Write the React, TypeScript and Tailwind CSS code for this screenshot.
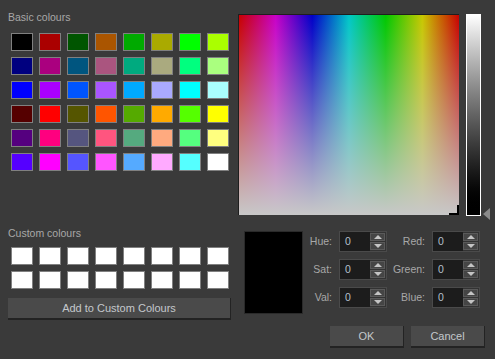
import React from "react";

const basic = [
  ["#000000", "#aa0000", "#005500", "#aa5500", "#00aa00", "#aaaa00", "#00ff00", "#aaff00"],
  ["#00007f", "#aa007f", "#00557f", "#aa557f", "#00aa7f", "#aaaa7f", "#00ff7f", "#aaff7f"],
  ["#0000ff", "#aa00ff", "#0055ff", "#aa55ff", "#00aaff", "#aaaaff", "#00ffff", "#aaffff"],
  ["#550000", "#ff0000", "#555500", "#ff5500", "#55aa00", "#ffaa00", "#55ff00", "#ffff00"],
  ["#55007f", "#ff007f", "#55557f", "#ff557f", "#55aa7f", "#ffaa7f", "#55ff7f", "#ffff7f"],
  ["#5500ff", "#ff00ff", "#5555ff", "#ff55ff", "#55aaff", "#ffaaff", "#55ffff", "#ffffff"],
];

const Swatch = ({ color }: { color: string }) => (
  <div className="w-[22px] h-[18px] border border-[#808080]" style={{ backgroundColor: color }} />
);

const Arrow = ({ up }: { up?: boolean }) => (
  <div className="flex-1 flex items-center justify-center bg-[#454545] border border-[#5a5a5a]">
    <svg width="8" height="4" viewBox="0 0 8 4">
      <path d={up ? "M0 4 L4 0 L8 4 Z" : "M0 0 L8 0 L4 4 Z"} fill="#c4c4c4" />
    </svg>
  </div>
);

const SpinBox = () => (
  <div className="w-[48px] h-[21px] flex border border-[#4a4a4a] bg-[#1c1c1c]">
    <div className="flex-1 pl-[5px] flex items-center text-[#b4c0cc]">0</div>
    <div className="w-[16px] flex flex-col gap-px py-px pr-px bg-[#333333]">
      <Arrow up />
      <Arrow />
    </div>
  </div>
);

const Label = ({ text }: { text: string }) => (
  <div className="flex justify-end items-center whitespace-nowrap">{text}</div>
);

const Button = ({ text, className }: { text: string; className: string }) => (
  <button
    className={`h-[22px] bg-[#4a4a4a] border-b-2 border-r border-[#232323] text-[#c4c8cc] text-[11px] ${className}`}
  >
    {text}
  </button>
);

export default function App() {
  return (
    <div
      className="w-[495px] h-[359px] bg-[#3a3a3a] flex text-[#a8a8a8] text-[10.5px] overflow-hidden"
      style={{ fontFamily: '"Liberation Sans", Arial, sans-serif' }}
    >
      <div className="w-[238px] pl-[8px] flex flex-col">
        <div className="mt-[11px] h-[13px] leading-[13px]">Basic colours</div>
        <div className="mt-[9px] ml-[3px] grid grid-cols-[repeat(8,22px)] gap-x-[6px] gap-y-[6px]">
          {basic.flat().map((c, i) => (
            <Swatch key={i} color={c} />
          ))}
        </div>
        <div className="mt-[56px] h-[13px] leading-[13px]">Custom colours</div>
        <div className="mt-[7px] ml-[3px] grid grid-cols-[repeat(8,22px)] gap-x-[6px] gap-y-[6px]">
          {Array.from({ length: 16 }).map((_, i) => (
            <Swatch key={i} color="#ffffff" />
          ))}
        </div>
        <Button text="Add to Custom Colours" className="mt-[9px] w-[223px]" />
      </div>

      <div className="flex-1 flex flex-col">
        <div className="mt-[14px] flex">
          <div
            className="relative w-[221px] h-[201px] border-t border-l border-[#1e1e1e] overflow-hidden"
            style={{
              background:
                "linear-gradient(to bottom, rgba(200,200,200,0), #c8c8c8), linear-gradient(to right, #c80000, #c800c8, #0000c8, #00c8c8, #00c800, #c8c800, #c80000)",
            }}
          >
            <div className="absolute right-0 bottom-0 w-[2px] h-[10px] bg-black" />
            <div className="absolute right-0 bottom-0 w-[10px] h-[2px] bg-black" />
          </div>
          <div className="relative ml-[7px] w-[15px] h-[202px] border border-white bg-gradient-to-b from-white to-black">
            <svg className="absolute left-[16px] top-[193px]" width="8" height="12" viewBox="0 0 8 12">
              <path d="M0 6 L7 0 L7 12 Z" fill="#8a8a8a" />
            </svg>
          </div>
        </div>

        <div className="mt-[15px] flex">
          <div className="ml-[6px] w-[59px] h-[83px] bg-black border border-[#2a2a2a]" />
          <div className="grid grid-cols-[29px_48px_31px_48px] auto-rows-[21px] gap-x-[7px] gap-y-[7px] text-[10.5px]">
            <Label text="Hue:" />
            <SpinBox />
            <Label text="Red:" />
            <SpinBox />
            <Label text="Sat:" />
            <SpinBox />
            <Label text="Green:" />
            <SpinBox />
            <Label text="Val:" />
            <SpinBox />
            <Label text="Blue:" />
            <SpinBox />
          </div>
        </div>

        <div className="mt-[12px] pr-[10px] flex justify-end gap-[7px]">
          <Button text="OK" className="w-[74px]" />
          <Button text="Cancel" className="w-[74px]" />
        </div>
      </div>
    </div>
  );
}
